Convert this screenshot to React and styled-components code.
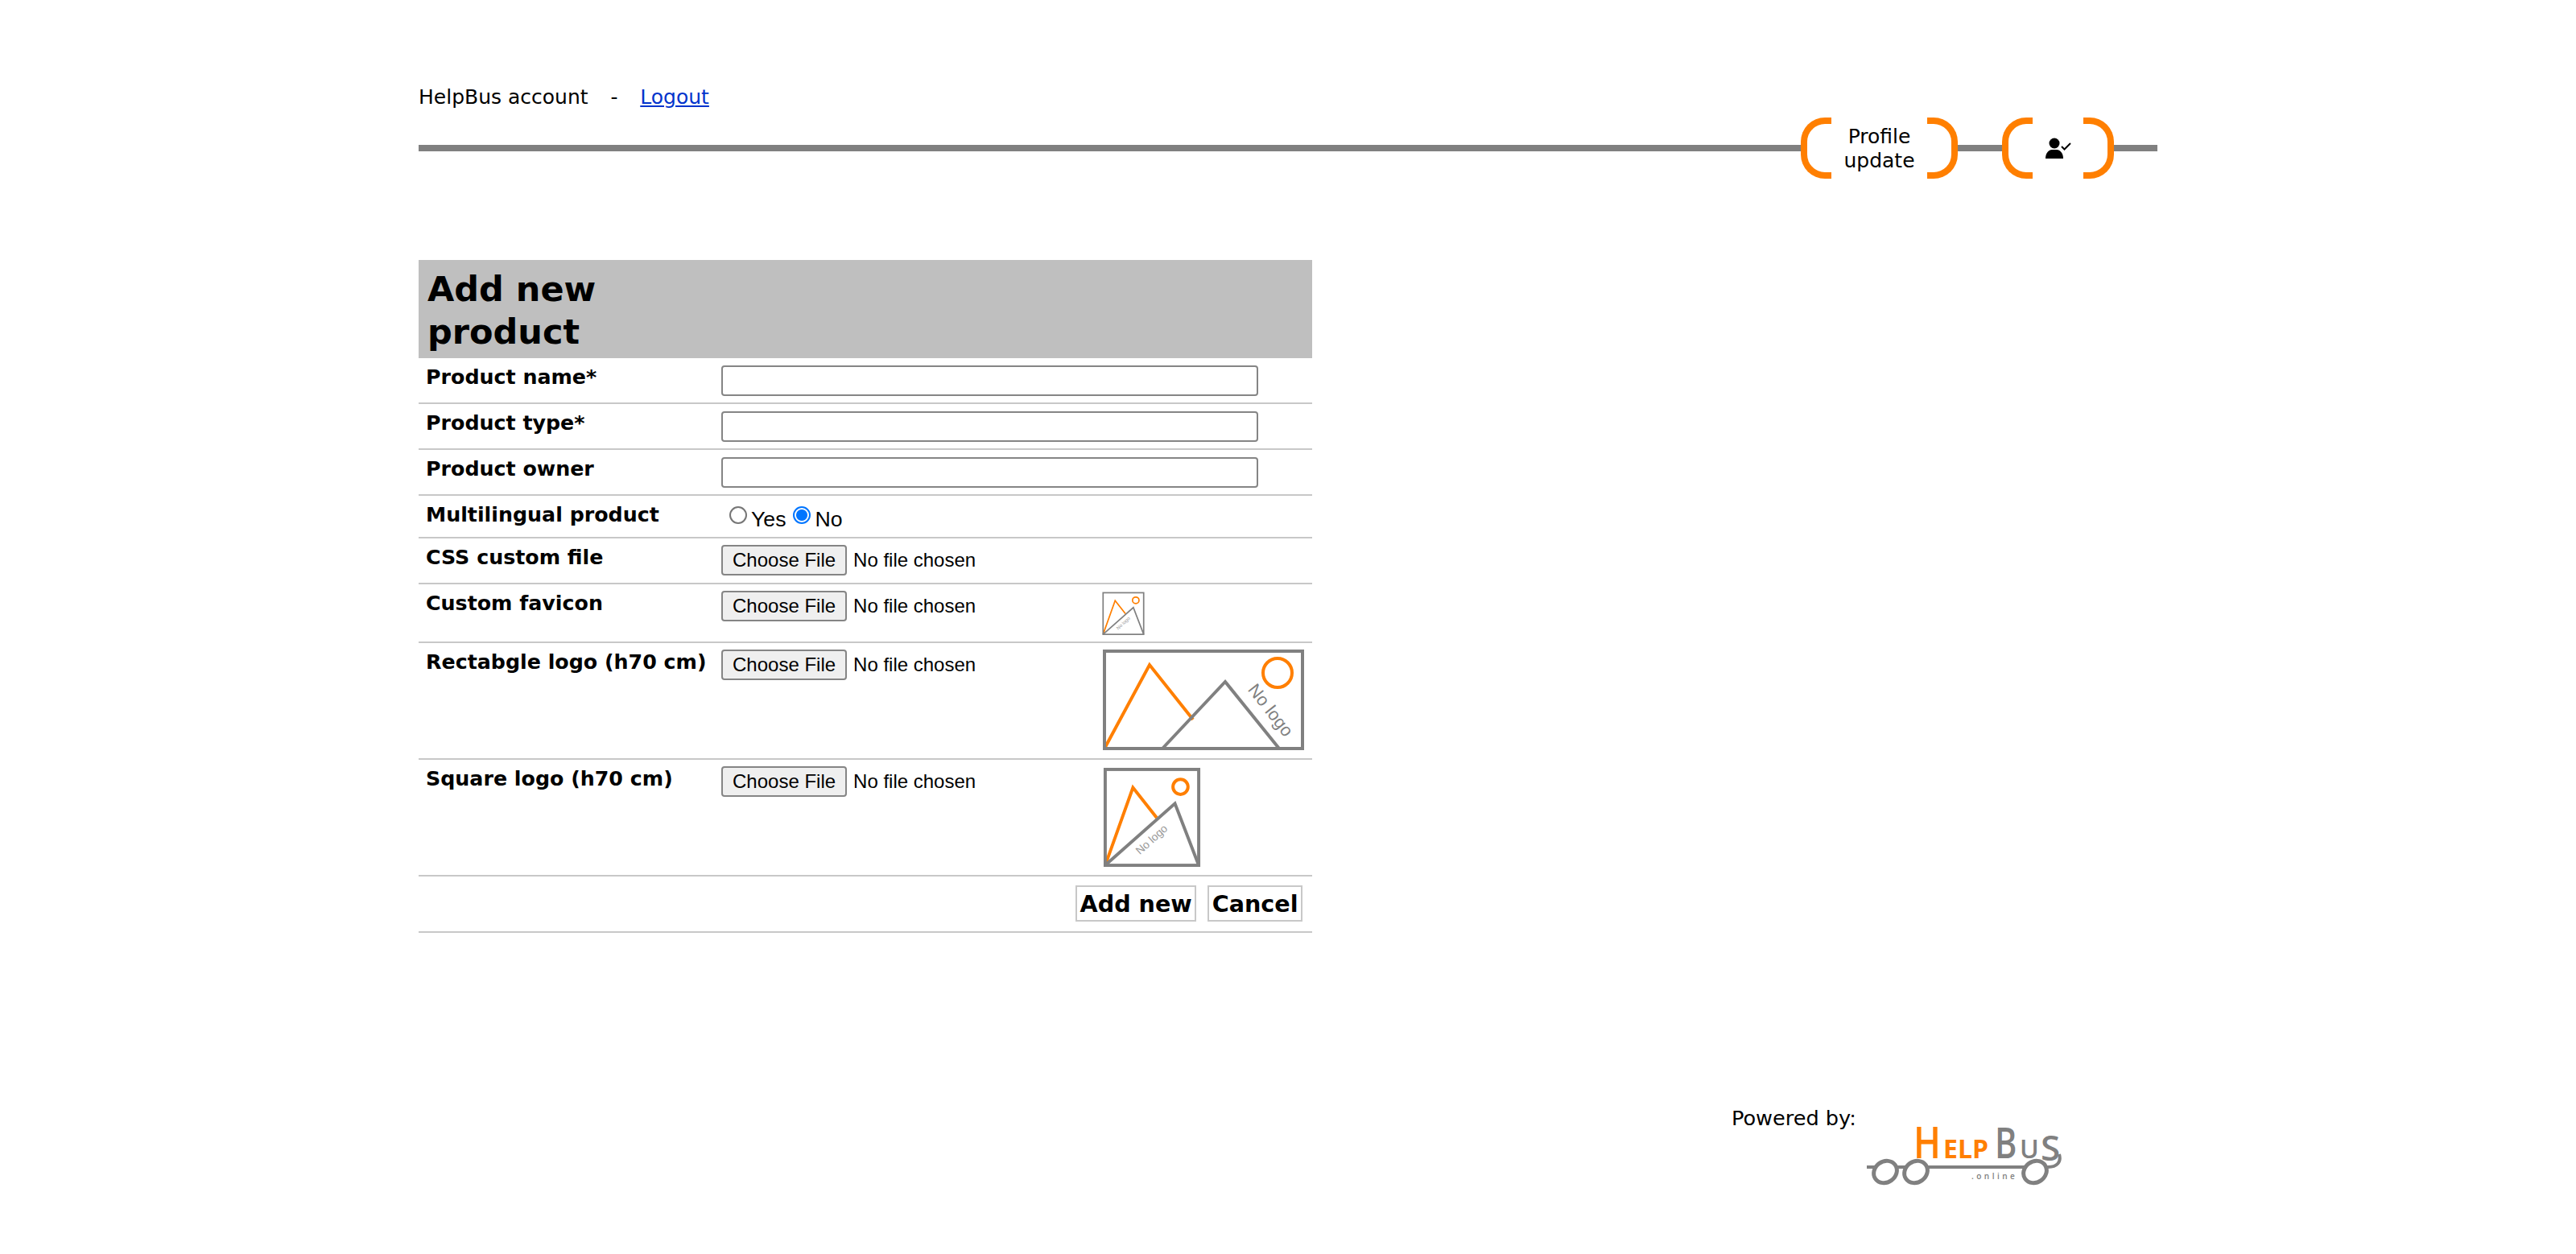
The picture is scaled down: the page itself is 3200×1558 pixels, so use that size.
import styled, { createGlobalStyle } from "styled-components"

const GlobalStyle = createGlobalStyle`
    html, body {
        margin: 0;
        padding: 0;
        background: #fff;
    }
    body {
        font-family: "DejaVu Sans", Verdana, sans-serif;
        font-size: 25px;
        color: #000;
    }
`

const Page = styled.div`
    width: 2160px;
    margin-left: 520px;
    padding-top: 106px;
`

const Account = styled.div`
    line-height: 30px;
    white-space: pre;

    a {
        color: #0033cc;
    }
`

const Dash = styled.span`
    margin: 0 4px;
`

const Nav = styled.nav`
    display: flex;
    justify-content: flex-end;
    align-items: center;
    gap: 55px;
    height: 76px;
    margin-top: 10px;
    padding-right: 54px;
    background: linear-gradient(#808080, #808080) center / 100% 8px no-repeat;
`

const NavItem = styled.div`
    position: relative;
    display: flex;
    justify-content: center;
    align-items: center;
    width: ${p => p.$width}px;
    height: 76px;
    padding-top: 2px;
    box-sizing: border-box;
    background: #fff;
    text-align: center;
    line-height: 30px;

    &::before, &::after {
        content: "";
        position: absolute;
        top: 0;
        bottom: 0;
        width: 38px;
        box-sizing: border-box;
        border: 8px solid #ff7f00;
    }
    &::before {
        left: 0;
        border-right: 0;
        border-radius: 30px 0 0 30px;
    }
    &::after {
        right: 0;
        border-left: 0;
        border-radius: 0 30px 30px 0;
    }
`

const Form = styled.div`
    width: 1110px;
    margin-top: 101px;
`

const Title = styled.div`
    height: 122px;
    padding: 10px 10px 0 11px;
    box-sizing: border-box;
    background: #bfbfbf;

    h2 {
        width: 346px;
        margin: 0;
        font-size: 43px;
        line-height: 53px;
        font-weight: bold;
    }
`

const Row = styled.div`
    display: grid;
    grid-template-columns: 368px 473px 1fr;
    align-items: start;
    height: ${p => p.$height}px;
    box-sizing: border-box;
    border-bottom: 2px solid #c8c8c8;
`

const Label = styled.div`
    padding: 9px 0 0 9px;
    font-weight: bold;
    font-size: 25.3px;
    line-height: 30px;
    white-space: nowrap;
`

const Cell = styled.div`
    padding: 9px 0 0 8px;
`

const TextInput = styled.input`
    display: block;
    width: 667px;
    height: 38px;
    box-sizing: border-box;
    border: 2px solid #858585;
    border-radius: 4px;
    background: #fff;
`

const FileInput = styled.input`
    display: block;
    width: 460px;
    margin-top: -1px;
    font-family: "Liberation Sans", Arial, sans-serif;
    font-size: 24px;
    color: #000;

    &::file-selector-button {
        height: 38px;
        margin-right: 8px;
        padding: 2px 12px;
        box-sizing: border-box;
        border: 2px solid #858585;
        border-radius: 4px;
        background: #efefef;
        font: inherit;
        color: #000;
    }
`

const Radios = styled.div`
    display: flex;
    align-items: flex-start;
    font-family: "Liberation Sans", Arial, sans-serif;
    font-size: 26.67px;
    line-height: 30px;
    padding: 3px 0 0 8px;

    label {
        display: flex;
        align-items: flex-start;
    }
    span {
        margin: 2px 7px 0 0;
    }
    input {
        appearance: none;
        width: 22px;
        height: 22px;
        margin: 1px 5px 0 2px;
        box-sizing: border-box;
        border: 2px solid #767676;
        border-radius: 50%;
        background: #fff;
    }
    input:checked {
        border-color: #0075ff;
        background: radial-gradient(circle, #0075ff 0 6.5px, #fff 7.5px);
    }
`

const Actions = styled.div`
    display: flex;
    justify-content: flex-end;
    gap: 14px;
    height: 70px;
    padding: 11px 12px 0 0;
    box-sizing: border-box;
    border-bottom: 2px solid #c8c8c8;
`

const ActionButton = styled.button`
    height: 45px;
    padding: 0 3.5px;
    border: 2px solid #c8c8c8;
    background: #fff;
    font-family: "DejaVu Sans", Verdana, sans-serif;
    font-size: 28.6px;
    font-weight: bold;
    color: #000;
`

const Footer = styled.div`
    display: flex;
    justify-content: flex-end;
    align-items: flex-start;
    gap: 9px;
    margin-top: 215px;
    padding-right: 115px;
    font-size: 25.6px;
    line-height: 30px;
`

const Logo = styled.svg`
    display: block;
    margin-top: -6px;
`

const UserCheck = () => (
    <svg width="32" height="28" viewBox="0 0 32 28">
        <circle cx="11" cy="7" r="6.5" fill="#000" />
        <path d="M0 26c0-7 4-11 8-11h6c4 0 8 4 8 11z" fill="#000" />
        <path d="M20 11l3.5 3.5L31 7" fill="none" stroke="#000" strokeWidth="2" />
    </svg>
)

const Placeholder = styled.svg`
    display: block;
    margin-top: ${p => p.$top || 0}px;
`

const RectPlaceholder = () => (
    <Placeholder $top={-2} width="252" height="127" viewBox="0 0 252 127">
        <path d="M3 124L59 20L113 88" fill="none" stroke="#ff7f00" strokeWidth="4" />
        <path d="M75 124L153 41L220 124" fill="none" stroke="#808080" strokeWidth="4" />
        <circle cx="218" cy="30" r="18" fill="none" stroke="#ff7f00" strokeWidth="4" />
        <text x="210" y="84" transform="rotate(52 210 76)" textAnchor="middle" fontFamily="Liberation Sans" fontSize="22" fill="#808080">No logo</text>
        <rect x="3" y="3" width="246" height="121" fill="none" stroke="#808080" strokeWidth="4" />
    </Placeholder>
)

const SquarePlaceholder = ({ width, height }) => (
    <Placeholder width={width} height={height} viewBox="0 0 124 128">
        <path d="M3 124L38 26L68 64" fill="none" stroke="#ff7f00" strokeWidth="4" />
        <path d="M3 124L91 46L121 124" fill="none" stroke="#808080" strokeWidth="4" />
        <circle cx="98" cy="25" r="9.5" fill="none" stroke="#ff7f00" strokeWidth="4" />
        <text x="62" y="96" transform="rotate(-42 62 92)" textAnchor="middle" fontFamily="Liberation Sans" fontSize="14" fill="#999">No logo</text>
        <rect x="3" y="3" width="118" height="121" fill="none" stroke="#808080" strokeWidth="4" />
    </Placeholder>
)

const HelpBusLogo = () => (
    <Logo width="250" height="110" viewBox="0 0 250 110">
        <g fontFamily="Open Sans">
            <text transform="translate(62 71) scale(0.82 1)" fontSize="55" fontWeight="600" fill="#ff7f00">H</text>
            <text transform="translate(99 71)" fontSize="32" fontWeight="bold" fill="#ff7f00">ELP</text>
            <text transform="translate(163 71) scale(0.8 1)" fontSize="52" fontWeight="600" fill="#808080">B</text>
            <text x="194" y="71" fontSize="32" fontWeight="600" fill="#808080">U</text>
            <text x="220" y="74" fontSize="44" fontWeight="600" fill="#808080">S</text>
            <text x="134" y="97" fontSize="10" fontWeight="600" fill="#808080" letterSpacing="3.5">.online</text>
        </g>
        <path d="M4 82H206" fill="none" stroke="#808080" strokeWidth="4" />
        <path d="M243 66c3 10-3 16-14 16h-17" fill="none" stroke="#808080" strokeWidth="4" />
        <g fill="#fff" stroke="#808080" strokeWidth="5">
            <ellipse cx="27" cy="88" rx="15" ry="13" transform="rotate(-35 27 88)" />
            <ellipse cx="65" cy="88" rx="15" ry="13" transform="rotate(-35 65 88)" />
            <ellipse cx="213" cy="88" rx="15" ry="13" transform="rotate(-35 213 88)" />
        </g>
    </Logo>
)

const FileRow = ({ label, height, children }) => (
    <Row $height={height}>
        <Label>{label}</Label>
        <Cell><FileInput type="file" /></Cell>
        <Cell>{children}</Cell>
    </Row>
)

const TextRow = ({ label }) => (
    <Row $height={57}>
        <Label>{label}</Label>
        <Cell><TextInput type="text" /></Cell>
    </Row>
)

const App = () => {
    return (
        <Page>
            <GlobalStyle />
            <Account>HelpBus account{"   "}<Dash>-</Dash>{"   "}<a href="#logout">Logout</a></Account>
            <Nav>
                <NavItem $width={195}>Profile<br />update</NavItem>
                <NavItem $width={139}><UserCheck /></NavItem>
            </Nav>
            <Form>
                <Title><h2>Add new product</h2></Title>
                <TextRow label="Product name*" />
                <TextRow label="Product type*" />
                <TextRow label="Product owner" />
                <Row $height={53}>
                    <Label>Multilingual product</Label>
                    <Cell>
                        <Radios>
                            <label><input type="radio" name="multi" /><span>Yes</span></label>
                            <label><input type="radio" name="multi" defaultChecked /><span>No</span></label>
                        </Radios>
                    </Cell>
                </Row>
                <FileRow label="CSS custom file" height={57} />
                <FileRow label="Custom favicon" height={73}>
                    <SquarePlaceholder width={53} height={55} />
                </FileRow>
                <FileRow label="Rectabgle logo (h70 cm)" height={145}>
                    <RectPlaceholder />
                </FileRow>
                <FileRow label="Square logo (h70 cm)" height={145}>
                    <SquarePlaceholder width={124} height={126} />
                </FileRow>
                <Actions>
                    <ActionButton>Add new</ActionButton>
                    <ActionButton>Cancel</ActionButton>
                </Actions>
            </Form>
            <Footer>
                <span>Powered by:</span>
                <HelpBusLogo />
            </Footer>
        </Page>
    )
}

export default App
